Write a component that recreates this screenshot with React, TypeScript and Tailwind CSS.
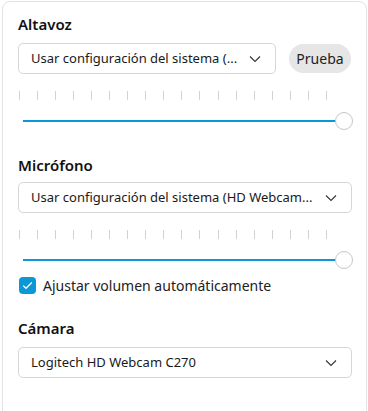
import React from "react";

const font = { fontFamily: '"Segoe UI", "Noto Sans", "Open Sans", sans-serif' };

function Chevron() {
  return (
    <svg width="12" height="8" viewBox="0 0 12 8" fill="none">
      <path d="M1 1.5 L6 6.5 L11 1.5" stroke="#333" strokeWidth="1.1" />
    </svg>
  );
}

function Select({ text, className }: { text: string; className: string }) {
  return (
    <div
      className={`flex items-center justify-between h-[31px] rounded-[5px] border border-[#d6d6d6] bg-white pl-3 pr-[14px] text-[13px] text-[#1a1a1a] ${className}`}
    >
      <span className="whitespace-nowrap">{text}</span>
      <Chevron />
    </div>
  );
}

function Ticks() {
  const ticks = Array.from({ length: 18 });
  return (
    <div className="flex h-[9px] w-[308px] justify-between ml-[1px]">
      {ticks.map((_, i) => (
        <div key={i} className="w-px h-full bg-[#d2d2d2]" />
      ))}
    </div>
  );
}

function Slider() {
  return (
    <div className="relative h-[18px] w-[334px] ml-[1px]">
      <div className="absolute left-[4px] right-[16px] top-[8px] h-[2px] bg-[#0b98d4]" />
      <div className="absolute right-0 top-0 h-[18px] w-[18px] rounded-full border border-[#c6c6c6] bg-white" />
    </div>
  );
}

export default function App() {
  return (
    <div className="h-[411px] w-[368px] overflow-hidden bg-white relative" style={font}>
      <div className="ml-[2px] mt-[1px] w-[365px] h-[430px] rounded-t-[8px] border border-[#e3e3e3] bg-white pl-[15px] pt-[12px]">
        <div className="text-[15px] font-semibold text-[#111] leading-[20px]">Altavoz</div>
        <div className="mt-[9px] flex items-center gap-[13px]">
          <Select text="Usar configuración del sistema (..." className="w-[258px]" />
          <div className="h-[29px] w-[62px] rounded-full bg-[#e6e6e6] flex items-center justify-center text-[14px] text-[#222]">
            Prueba
          </div>
        </div>
        <div className="mt-[17px]">
          <Ticks />
        </div>
        <div className="mt-[12px]">
          <Slider />
        </div>
        <div className="mt-[25px] text-[15px] font-semibold text-[#111] leading-[20px]">Micrófono</div>
        <div className="mt-[7px]">
          <Select text="Usar configuración del sistema (HD Webcam..." className="w-[334px]" />
        </div>
        <div className="mt-[17px]">
          <Ticks />
        </div>
        <div className="mt-[12px]">
          <Slider />
        </div>
        <div className="mt-[6px] flex items-center gap-[7px]">
          <div className="h-[17px] w-[17px] ml-[1px] rounded-[4px] bg-[#0b98d4] flex items-center justify-center">
            <svg width="11" height="9" viewBox="0 0 11 9" fill="none">
              <path d="M1.2 4.6 L4 7.3 L9.8 1.5" stroke="white" strokeWidth="1.3" />
            </svg>
          </div>
          <span className="text-[14px] text-[#222]">Ajustar volumen automáticamente</span>
        </div>
        <div className="mt-[22px] text-[15px] font-semibold text-[#111] leading-[20px]">Cámara</div>
        <div className="mt-[9px]">
          <Select text="Logitech HD Webcam C270" className="w-[334px]" />
        </div>
      </div>
    </div>
  );
}
